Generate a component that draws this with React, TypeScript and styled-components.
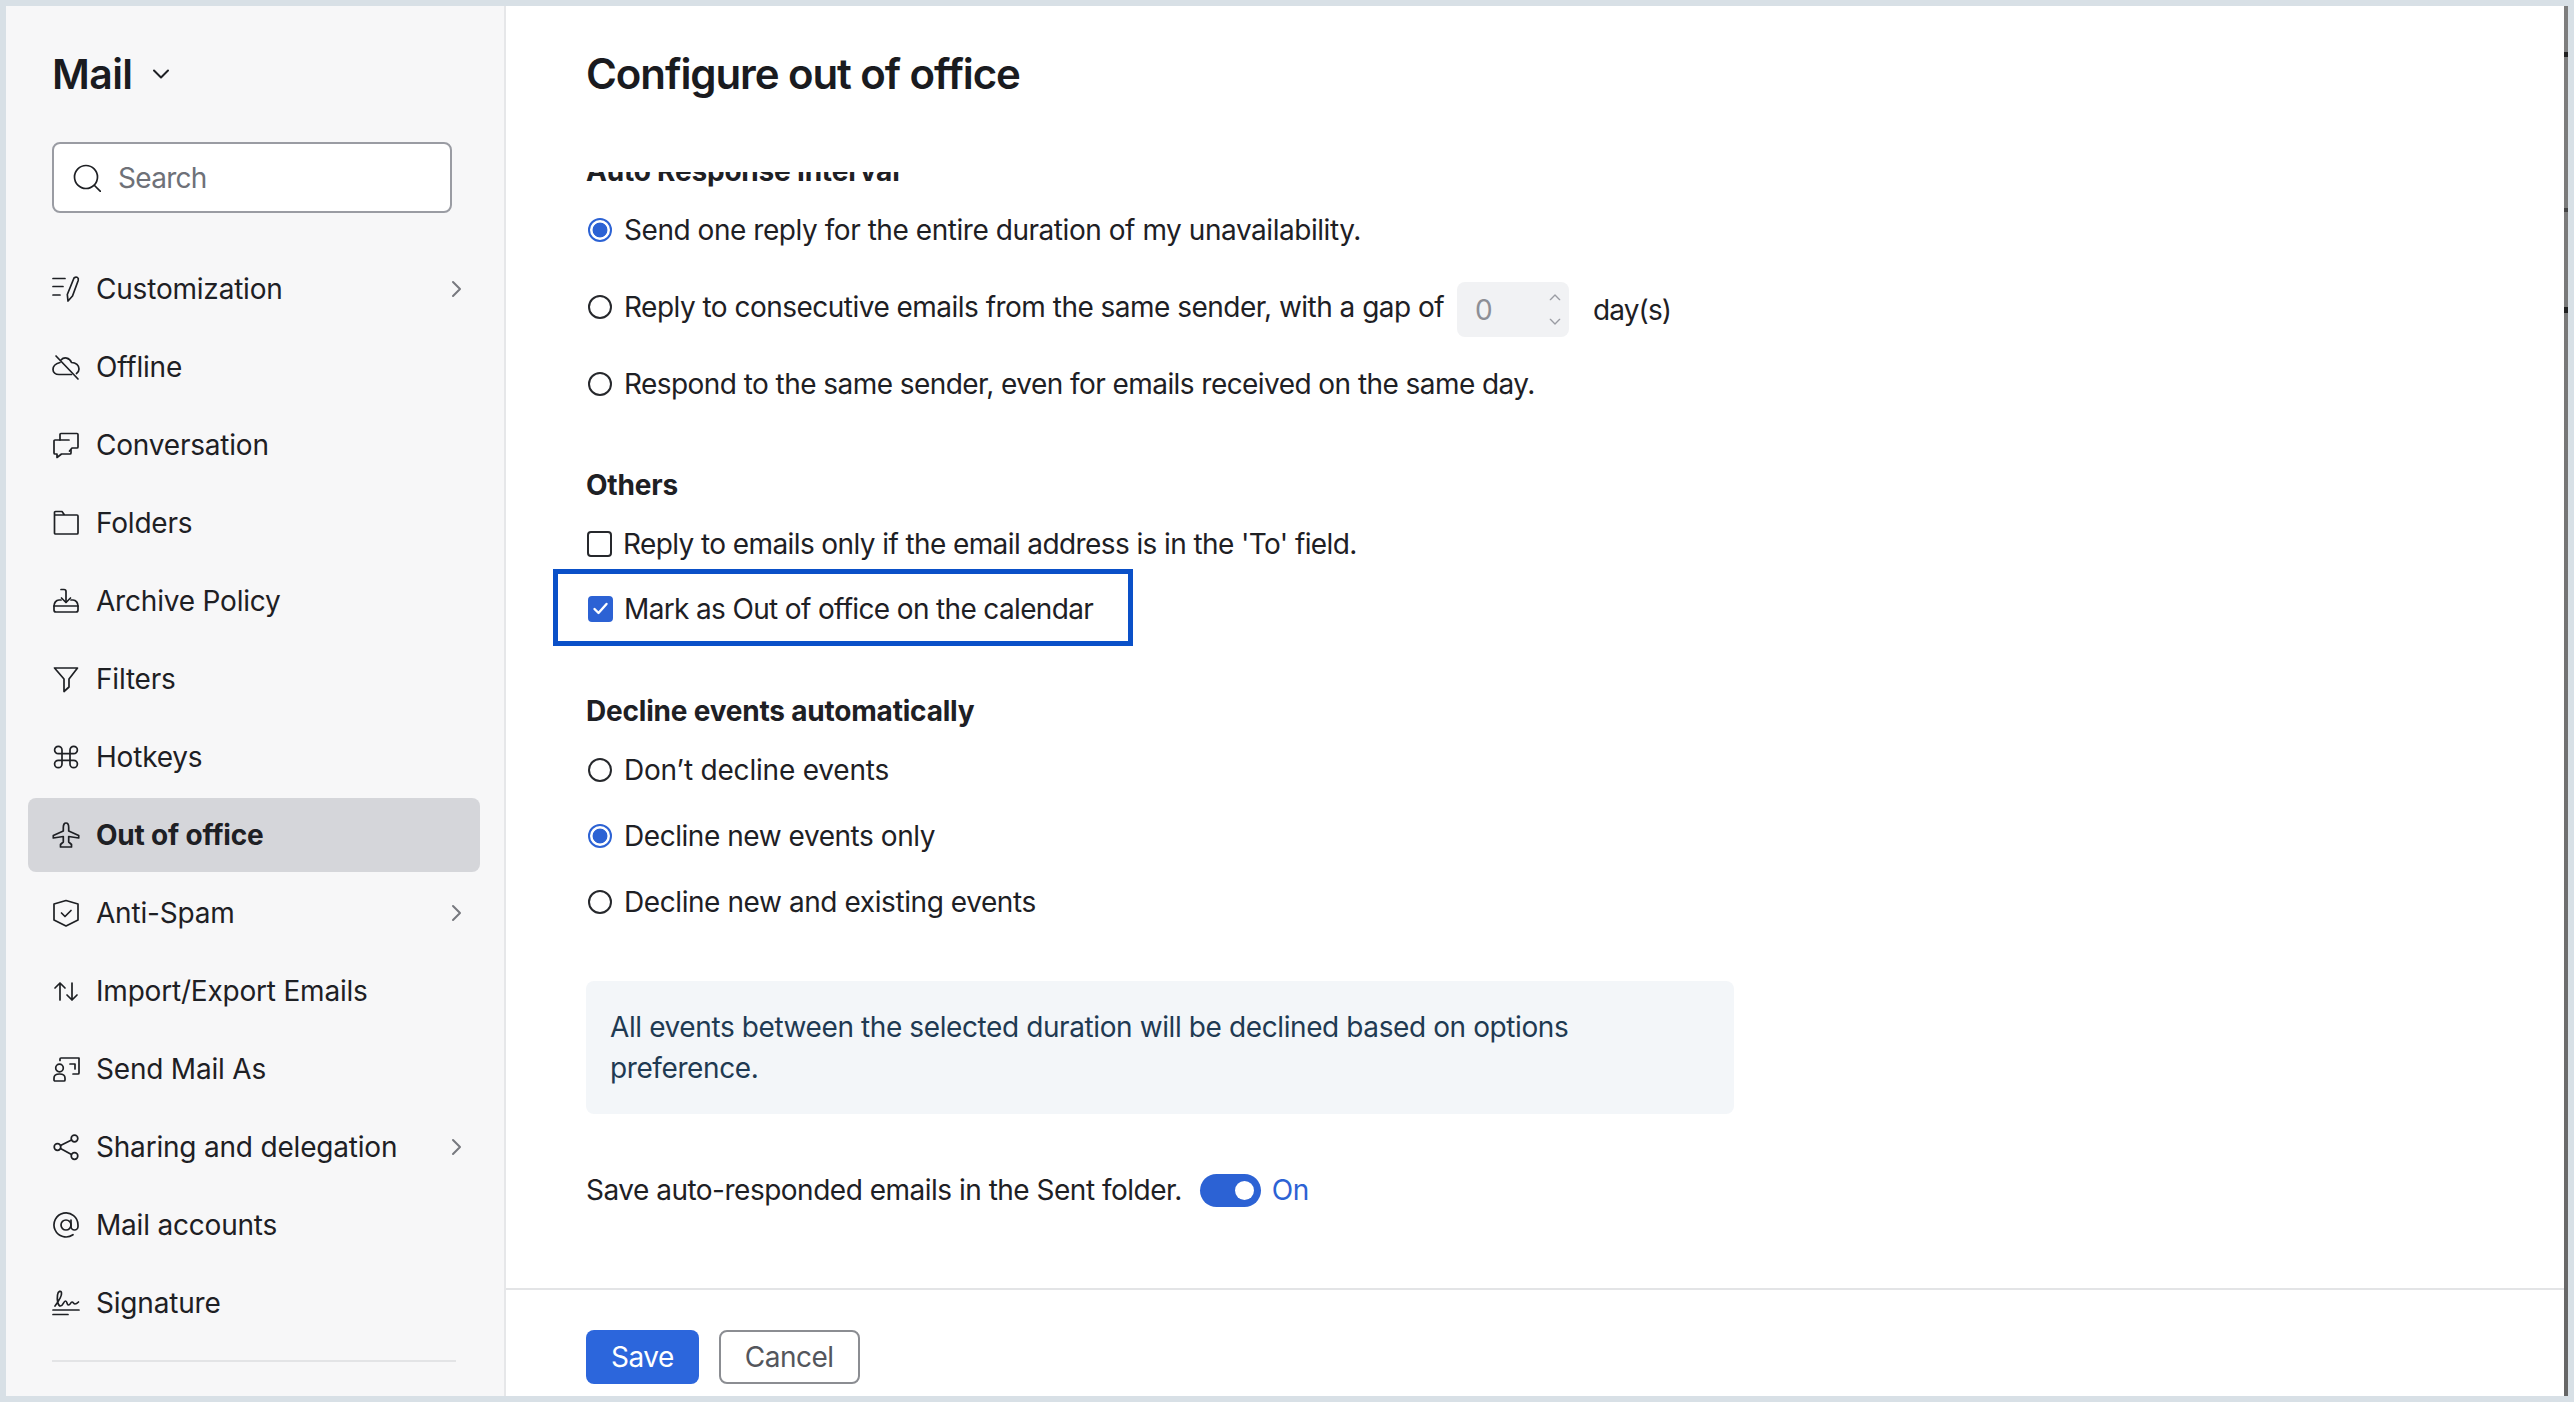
import React from 'react';
import styled, { createGlobalStyle } from 'styled-components';

const Global = createGlobalStyle`
  html, body { margin: 0; padding: 0; background: #d8e0e6; }
  * { box-sizing: border-box; }
  body { font-family: Inter, 'Noto Sans', sans-serif; color: #1e2024; }
`;

const Frame = styled.div`
  width: 2574px;
  height: 1402px;
  padding: 6px;
  display: flex;
  background: #d8e0e6;
  overflow: hidden;
`;

const Sidebar = styled.aside`
  width: 500px;
  flex-shrink: 0;
  background: #f7f7f8;
  border-right: 2px solid #e6e7e9;
  display: flex;
  flex-direction: column;
`;

const Brand = styled.div`
  display: flex;
  align-items: center;
  height: 136px;
  padding: 0 0 0 46px;
  gap: 20px;
`;

const BrandName = styled.div`
  font-size: 41px;
  font-weight: 600;
  letter-spacing: -0.6px;
  color: #1a1b1f;
`;

const SearchBox = styled.div`
  margin-left: 46px;
  width: 400px;
  height: 71px;
  border: 2px solid #9a9ca3;
  border-radius: 8px;
  background: #fff;
  display: flex;
  align-items: center;
  padding-left: 19px;
  gap: 17px;
  font-size: 28px;
  letter-spacing: -0.7px;
  color: #6e7178;
`;

const NavList = styled.nav`
  margin-top: 39px;
  display: flex;
  flex-direction: column;
  padding: 0 0 0 22px;
`;

const NavItem = styled.div<{ $active?: boolean }>`
  width: 452px;
  height: 74px;
  margin-bottom: 4px;
  display: flex;
  align-items: center;
  padding: 0 14px 0 24px;
  gap: 16px;
  border-radius: 8px;
  font-size: 28px;
  letter-spacing: -0.2px;
  font-weight: ${p => (p.$active ? 700 : 400)};
  background: ${p => (p.$active ? '#d5d6da' : 'transparent')};
`;

const NavLabel = styled.span`
  flex: 1;
`;

const SideRule = styled.div`
  margin: 16px 0 0 46px;
  width: 404px;
  height: 2px;
  background: #e3e4e6;
`;

const Main = styled.main`
  flex: 1;
  min-width: 0;
  display: flex;
  flex-direction: column;
  background: #fff;
`;

const Title = styled.h1`
  margin: 0;
  height: 166px;
  flex-shrink: 0;
  padding: 45px 0 0 80px;
  font-size: 42px;
  line-height: 46px;
  font-weight: 600;
  letter-spacing: -1.1px;
  color: #1a1b1f;
`;

const Scroll = styled.div`
  flex: 1;
  min-height: 0;
  overflow: hidden;
  padding-left: 80px;
`;

const Heading = styled.h2`
  margin: 0;
  height: 40px;
  display: flex;
  align-items: center;
  font-size: 28px;
  font-weight: 700;
  letter-spacing: -0.2px;
`;

const ClippedHeading = styled(Heading)`
  margin-top: -21px;
`;

const Group = styled.section<{ $top: number }>`
  margin-top: ${p => p.$top}px;
`;

const Row = styled.label<{ $h: number; $track?: number }>`
  display: flex;
  align-items: center;
  height: ${p => p.$h}px;
  gap: 12px;
  font-size: 28px;
  letter-spacing: ${p => p.$track ?? -0.52}px;
  white-space: nowrap;
`;

const Radio = styled.span<{ $on?: boolean }>`
  width: 24px;
  height: 24px;
  margin-left: 2px;
  flex-shrink: 0;
  border-radius: 50%;
  border: 2px solid ${p => (p.$on ? '#2c62d4' : '#26282c')};
  background: ${p => (p.$on ? 'radial-gradient(circle, #2c62d4 0 7px, #fff 7.8px)' : '#fff')};
`;

const Check = styled.span<{ $on?: boolean }>`
  width: 25px;
  height: 26px;
  margin-left: 1px;
  margin-right: -1px;
  flex-shrink: 0;
  border-radius: 4px;
  border: 2px solid ${p => (p.$on ? '#2c62d4' : '#26282c')};
  background: ${p => (p.$on ? '#2c62d4' : '#fff')};
  display: flex;
  align-items: center;
  justify-content: center;
`;

const Stepper = styled.div`
  width: 112px;
  height: 55px;
  margin: 6px 0 0 1px;
  background: #f1f2f4;
  border-radius: 8px;
  display: flex;
  align-items: center;
  justify-content: space-between;
  padding: 0 8px 0 18px;
  color: #8d8f96;
  font-size: 28px;
`;

const StepperArrows = styled.div`
  display: flex;
  flex-direction: column;
  gap: 13px;
`;

const Days = styled.span`
  margin: 6px 0 0 12px;
  letter-spacing: -0.9px;
`;

const Highlight = styled.div`
  margin-left: -33px;
  width: 580px;
  height: 77px;
  border: 5px solid #0a50c8;
  padding: 2px 0 0 29px;
  display: flex;
  align-items: center;
`;

const Note = styled.div`
  margin-top: 46px;
  width: 1148px;
  height: 133px;
  padding: 26px 24px 0;
  background: #f3f6f9;
  border-radius: 8px;
  font-size: 28px;
  line-height: 41px;
  letter-spacing: -0.4px;
  color: #1f3a52;
`;

const SaveRow = styled.div`
  margin-top: 56px;
  display: flex;
  align-items: center;
  height: 40px;
  font-size: 28px;
  letter-spacing: -0.5px;
`;

const Toggle = styled.span`
  width: 61px;
  height: 33px;
  margin-left: 18px;
  border-radius: 17px;
  background: #2c62d4;
  display: flex;
  align-items: center;
  justify-content: flex-end;
  padding-right: 7px;
  &::after {
    content: '';
    width: 19px;
    height: 19px;
    border-radius: 50%;
    background: #fff;
  }
`;

const ToggleText = styled.span`
  margin-left: 11px;
  color: #2c62d4;
`;

const Footer = styled.footer`
  height: 108px;
  flex-shrink: 0;
  border-top: 2px solid #e3e4e6;
  padding: 40px 0 0 80px;
  display: flex;
  gap: 20px;
  align-items: flex-start;
`;

const Button = styled.button<{ $primary?: boolean }>`
  height: 54px;
  padding: 0 ${p => (p.$primary ? 25 : 24)}px;
  border-radius: 8px;
  font: 400 28px Inter, sans-serif;
  letter-spacing: -0.5px;
  border: ${p => (p.$primary ? 'none' : '2px solid #8b8d92')};
  background: ${p => (p.$primary ? '#2c66dc' : '#fff')};
  color: ${p => (p.$primary ? '#fff' : '#54565c')};
`;

const Edge = styled.div`
  width: 4px;
  flex-shrink: 0;
  background:
    linear-gradient(#222 0 0) 0 46px / 4px 5px no-repeat,
    linear-gradient(#444 0 0) 0 202px / 4px 4px no-repeat,
    linear-gradient(#222 0 0) 0 301px / 4px 6px no-repeat,
    linear-gradient(#7e7e7e, #666);
`;

const Stroke = styled.svg`
  width: 28px;
  height: 28px;
  flex-shrink: 0;
  fill: none;
  stroke: #1e2024;
  stroke-width: 1.7;
  stroke-linecap: round;
  stroke-linejoin: round;
`;

const Ico: React.FC<{ children: React.ReactNode }> = ({ children }) => (
  <Stroke viewBox="0 0 28 28">{children}</Stroke>
);

const icons: Record<string, React.ReactNode> = {
  custom: (
    <>
      <path d="M1 3.500h12M1 11.500h10M1 20h7" />
      <path d="M22 3c2.500-2 5-.5 4.200 2.500L20.500 21l-4.500 5-.7-6.500z" />
    </>
  ),
  offline: (
    <>
      <path d="M4 3l22 23" />
      <path d="M9 7c3-3.500 8.500-2.500 10.500 2.500 4.500 0 7.500 3 7.500 6.500 0 2-1 3.500-2.500 4.500" />
      <path d="M8 9.500C4 10.500 1 13 1 16.500 1 19.500 3.500 21.500 7 21.500h12.500" />
    </>
  ),
  chat: (
    <>
      <path d="M8 9V3.500a1 1 0 0 1 1-1h16a1 1 0 0 1 1 1V16a1 1 0 0 1-1 1h-5l-2.500 3" />
      <path d="M17 9H3a1 1 0 0 0-1 1v12a1 1 0 0 0 1 1h2v3.500l4.500-3.500H18a1 1 0 0 0 1-1v-3" />
    </>
  ),
  folder: (
    <path d="M2.500 8V3.500a1 1 0 0 1 1-1H10L12.500 6H25a1 1 0 0 1 1 1v17a1 1 0 0 1-1 1H3.500a1 1 0 0 1-1-1zM2.500 6H12.500" />
  ),
  archive: (
    <>
      <path d="M9 2.500h3a2 2 0 0 1 2 2V15" />
      <path d="M9.500 11l4.500 4.500L18.500 11" />
      <path d="M9 13H7c-3 0-5 3-5 6v4a2 2 0 0 0 2 2h20a2 2 0 0 0 2-2v-4c0-3-2-6-5-6h-2" />
      <path d="M2 19h24" />
    </>
  ),
  filter: <path d="M2.500 3h23L17 14v8l-5 4.500V14z" />,
  hotkeys: (
    <path d="M18 7v14a3.700 3.700 0 1 0 3.700-3.700H6.300A3.700 3.700 0 1 0 10 21V7a3.700 3.700 0 1 0-3.700 3.700h15.400A3.700 3.700 0 1 0 18 7" />
  ),
  plane: (
    <path d="M14 2c1.700 0 2.700 2.300 2.700 4.500V10l10 4.500V17l-10-1.500V21l2.800 2.500V26h-11v-2.500l2.800-2.500v-5.500L1.300 17v-2.500l10-4.500V6.500C11.300 4.300 12.300 2 14 2z" />
  ),
  shield: (
    <>
      <path d="M14 1.500L26 5v16l-12 6L2 21V5z" />
      <path d="M9.500 14l3.500 3.500 6-6" />
    </>
  ),
  updown: <path d="M8 23V6M3 11l5-5 5 5M20 6v17M15 18l5 5 5-5" />,
  sendas: (
    <>
      <path d="M8 5.500V4a1 1 0 0 1 1-1h18v15a1 1 0 0 1-1 1h-5" />
      <path d="M18 9h5v5" />
      <circle cx="7.500" cy="13" r="3.800" />
      <path d="M2 25v-2c0-2.500 2-4 5.500-4s5.500 1.500 5.500 4v2a1 1 0 0 1-1 1H3a1 1 0 0 1-1-1z" />
    </>
  ),
  share: (
    <>
      <circle cx="22.500" cy="5.500" r="3.300" />
      <circle cx="5.500" cy="14" r="3.300" />
      <circle cx="22.500" cy="23" r="3.300" />
      <path d="M8.500 12.500l11-5.500M8.500 15.500l11 6" />
    </>
  ),
  at: (
    <>
      <circle cx="14" cy="14" r="5" />
      <path d="M19 9v6.500a3.500 3.500 0 0 0 7 0V14a12 12 0 1 0-5 9.700" />
    </>
  ),
  signature: (
    <>
      <path d="M1 21h26M1 25.500h15" />
      <path d="M3 17c3-4 7-10 6.500-13C9 1 6 2 5.500 6c-.5 4 0 11 3 11 2.500 0 3-5 5-5s1 4 3 4 2-3 3.500-3 1.500 2 3 2 2.500-1 3.500-2" />
    </>
  ),
};

const SearchIcon = () => (
  <Stroke viewBox="0 0 28 28">
    <circle cx="13" cy="13" r="11.500" />
    <path d="M21.500 21.500l6 6" />
  </Stroke>
);

const ChevronSvg = styled.svg<{ $size: number; $color: string }>`
  width: ${p => p.$size}px;
  height: ${p => p.$size}px;
  flex-shrink: 0;
  fill: none;
  stroke: ${p => p.$color};
  stroke-width: 2;
  stroke-linecap: round;
  stroke-linejoin: round;
`;

const nav = [
  { icon: 'custom', label: 'Customization', more: true },
  { icon: 'offline', label: 'Offline' },
  { icon: 'chat', label: 'Conversation' },
  { icon: 'folder', label: 'Folders' },
  { icon: 'archive', label: 'Archive Policy' },
  { icon: 'filter', label: 'Filters' },
  { icon: 'hotkeys', label: 'Hotkeys' },
  { icon: 'plane', label: 'Out of office', active: true },
  { icon: 'shield', label: 'Anti-Spam', more: true },
  { icon: 'updown', label: 'Import/Export Emails' },
  { icon: 'sendas', label: 'Send Mail As' },
  { icon: 'share', label: 'Sharing and delegation', more: true },
  { icon: 'at', label: 'Mail accounts' },
  { icon: 'signature', label: 'Signature' },
];

export default function App() {
  return (
    <Frame>
      <Global />
      <Sidebar>
        <Brand>
          <BrandName>Mail</BrandName>
          <ChevronSvg $size={18} $color="#1e2024" viewBox="0 0 18 18">
            <path d="M2 5.500l7 7 7-7" />
          </ChevronSvg>
        </Brand>
        <SearchBox>
          <SearchIcon />
          Search
        </SearchBox>
        <NavList>
          {nav.map(item => (
            <NavItem key={item.label} $active={item.active}>
              <Ico>{icons[item.icon]}</Ico>
              <NavLabel>{item.label}</NavLabel>
              {item.more && (
                <ChevronSvg $size={18} $color="#77797f" viewBox="0 0 18 18">
                  <path d="M5 2l7 7-7 7" />
                </ChevronSvg>
              )}
            </NavItem>
          ))}
        </NavList>
        <SideRule />
      </Sidebar>

      <Main>
        <Title>Configure out of office</Title>
        <Scroll>
          <ClippedHeading>Auto Response Interval</ClippedHeading>
          <Row $h={77} $track={-0.45}><Radio $on />Send one reply for the entire duration of my unavailability.</Row>
          <Row $h={77}>
            <Radio />
            Reply to consecutive emails from the same sender, with a gap of
            <Stepper>
              0
              <StepperArrows>
                <ChevronSvg $size={12} $color="#9a9ca3" viewBox="0 0 18 18"><path d="M2 13l7-7 7 7" /></ChevronSvg>
                <ChevronSvg $size={12} $color="#9a9ca3" viewBox="0 0 18 18"><path d="M2 5l7 7 7-7" /></ChevronSvg>
              </StepperArrows>
            </Stepper>
            <Days>day(s)</Days>
          </Row>
          <Row $h={77} $track={-0.56}><Radio />Respond to the same sender, even for emails received on the same day.</Row>

          <Group $top={43}>
            <Heading>Others</Heading>
            <Group $top={13}>
              <Row $h={51} $track={-0.6}><Check />Reply to emails only if the email address is in the 'To' field.</Row>
            </Group>
            <Highlight>
              <Row $h={65} $track={-0.65}>
                <Check $on>
                  <svg width="17" height="17" viewBox="0 0 17 17" fill="none" stroke="#fff" strokeWidth="2.400" strokeLinecap="round" strokeLinejoin="round">
                    <path d="M2.500 9l4 4 8-9" />
                  </svg>
                </Check>
                Mark as Out of office on the calendar
              </Row>
            </Highlight>
          </Group>

          <Group $top={45}>
            <Heading>Decline events automatically</Heading>
            <Group $top={6}>
              <Row $h={66} $track={-0.2}><Radio />Don’t decline events</Row>
              <Row $h={66} $track={-0.45}><Radio $on />Decline new events only</Row>
              <Row $h={66} $track={-0.42}><Radio />Decline new and existing events</Row>
            </Group>
          </Group>

          <Note>All events between the selected duration will be declined based on options preference.</Note>

          <SaveRow>
            Save auto-responded emails in the Sent folder.
            <Toggle />
            <ToggleText>On</ToggleText>
          </SaveRow>
        </Scroll>
        <Footer>
          <Button $primary>Save</Button>
          <Button>Cancel</Button>
        </Footer>
      </Main>
      <Edge />
    </Frame>
  );
}
